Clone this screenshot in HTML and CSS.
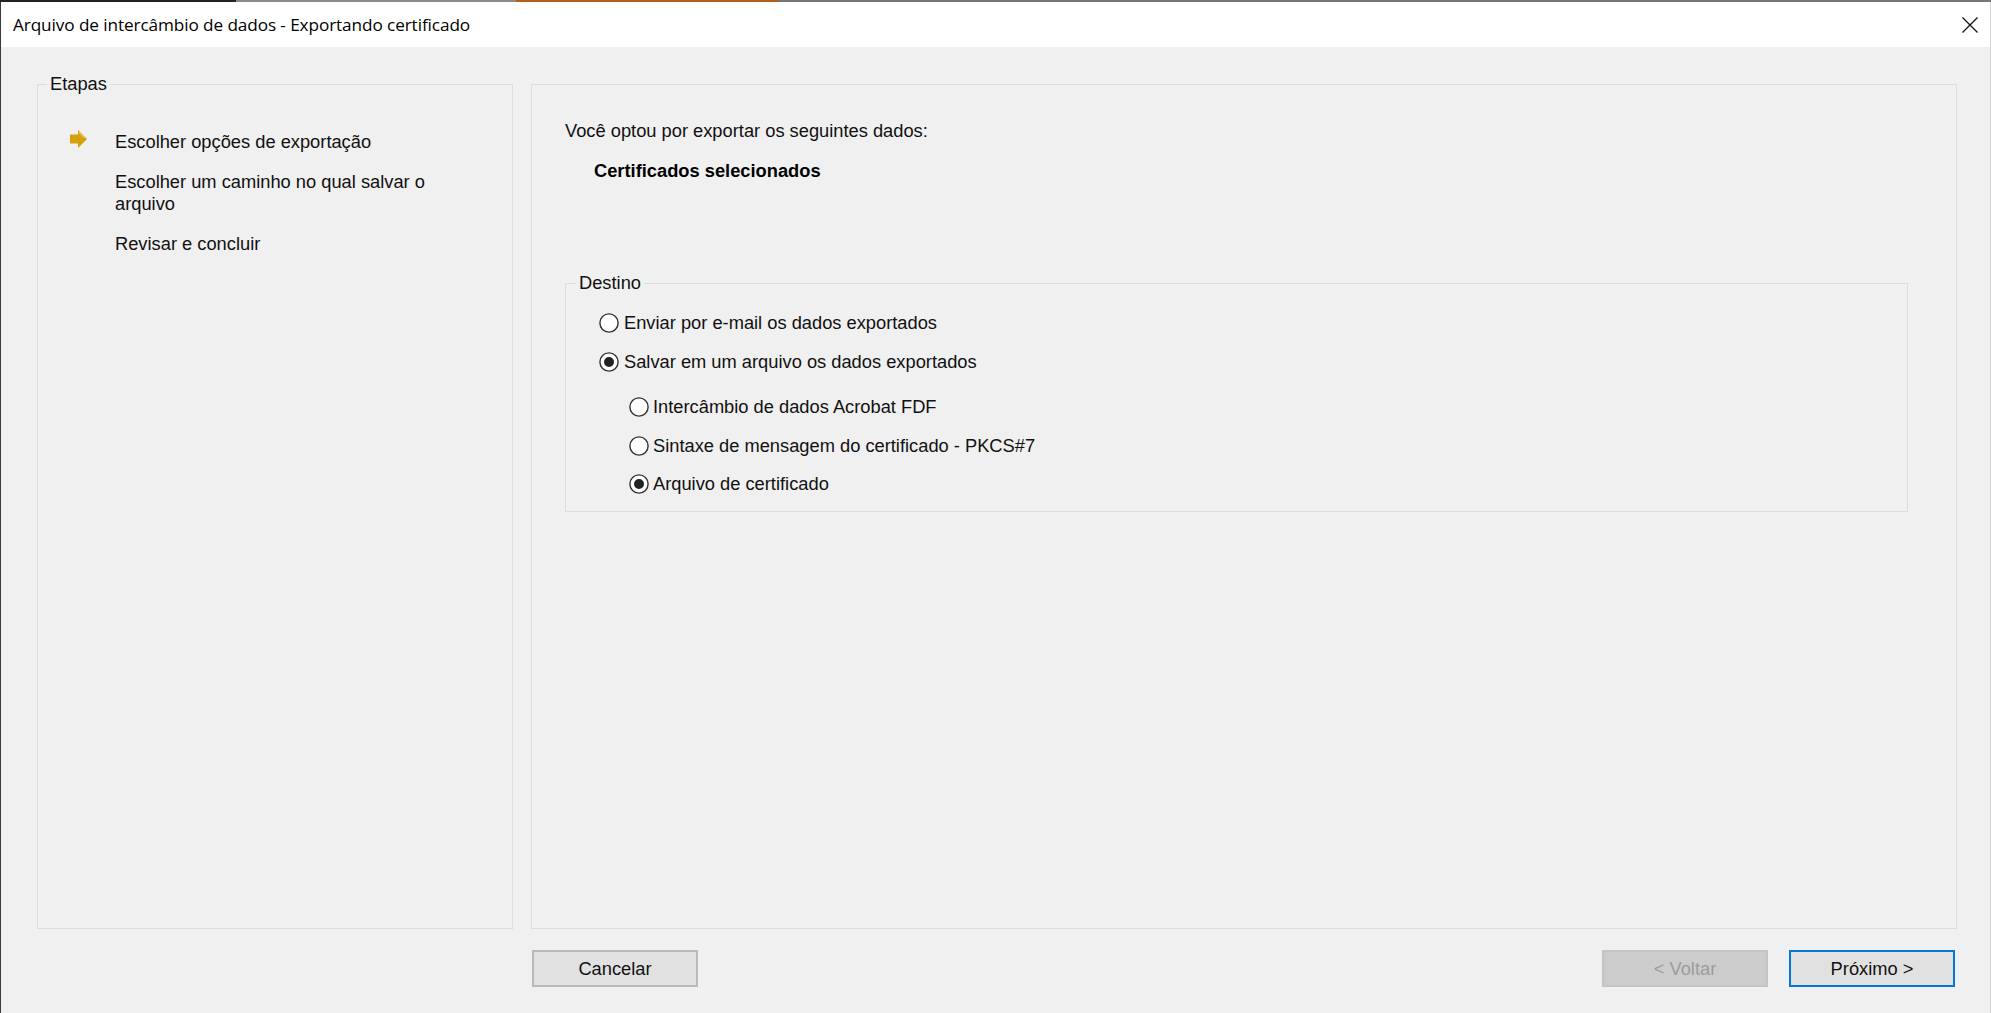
FILE: index.html
```html
<!DOCTYPE html>
<html lang="pt-BR">
<head>
<meta charset="utf-8">
<title>Arquivo de intercâmbio de dados - Exportando certificado</title>
<link rel="stylesheet" href="styles.css">
</head>
<body>
<div class="screen-edge">
  <span class="seg seg-dark"></span>
  <span class="seg seg-gray"></span>
  <span class="seg seg-orange"></span>
  <span class="seg seg-rest"></span>
</div>
<div class="window">
  <header class="titlebar">
    <span class="title">Arquivo de intercâmbio de dados - Exportando certificado</span>
    <button class="close" aria-label="Fechar">
      <svg width="16" height="16" viewBox="0 0 16 16"><path d="M0.5 0.5L15.5 15.5M15.5 0.5L0.5 15.5" stroke="#111" stroke-width="1.3" fill="none"/></svg>
    </button>
  </header>
  <main class="dialog">
    <fieldset class="steps">
      <legend>Etapas</legend>
      <ol class="step-list">
        <li class="step">
          <span class="step-icon"><svg width="17" height="18" viewBox="0 0 17 18"><path d="M0 4.5H8V0L17 9L8 18V13.5H0Z" fill="#d4a00c"/><path d="M8.8 2.2L14.5 7.8" stroke="#e8c458" stroke-width="1.2"/></svg></span>
          <span class="step-text">Escolher opções de exportação</span>
        </li>
        <li class="step">
          <span class="step-icon"></span>
          <span class="step-text">Escolher um caminho no qual salvar o arquivo</span>
        </li>
        <li class="step">
          <span class="step-icon"></span>
          <span class="step-text">Revisar e concluir</span>
        </li>
      </ol>
    </fieldset>
    <section class="main-panel">
      <p class="intro">Você optou por exportar os seguintes dados:</p>
      <p class="selected">Certificados selecionados</p>
      <fieldset class="group">
        <legend>Destino</legend>
        <div class="radio-list">
          <label class="radio">
            <svg class="radio-mark" width="20" height="20" viewBox="0 0 20 20"><circle cx="10" cy="10" r="9.1" fill="#fff" stroke="#333" stroke-width="1.4"/></svg>
            <span>Enviar por e-mail os dados exportados</span>
          </label>
          <label class="radio">
            <svg class="radio-mark" width="20" height="20" viewBox="0 0 20 20"><circle cx="10" cy="10" r="9.1" fill="#fff" stroke="#333" stroke-width="1.4"/><circle cx="10" cy="10" r="5" fill="#222"/></svg>
            <span>Salvar em um arquivo os dados exportados</span>
          </label>
          <div class="radio-sub">
            <label class="radio">
              <svg class="radio-mark" width="20" height="20" viewBox="0 0 20 20"><circle cx="10" cy="10" r="9.1" fill="#fff" stroke="#333" stroke-width="1.4"/></svg>
              <span>Intercâmbio de dados Acrobat FDF</span>
            </label>
            <label class="radio">
              <svg class="radio-mark" width="20" height="20" viewBox="0 0 20 20"><circle cx="10" cy="10" r="9.1" fill="#fff" stroke="#333" stroke-width="1.4"/></svg>
              <span>Sintaxe de mensagem do certificado - PKCS#7</span>
            </label>
            <label class="radio">
              <svg class="radio-mark" width="20" height="20" viewBox="0 0 20 20"><circle cx="10" cy="10" r="9.1" fill="#fff" stroke="#333" stroke-width="1.4"/><circle cx="10" cy="10" r="5" fill="#222"/></svg>
              <span>Arquivo de certificado</span>
            </label>
          </div>
        </div>
      </fieldset>
    </section>
    <div class="actions">
      <button class="btn">Cancelar</button>
      <div class="nav-buttons">
        <button class="btn btn-disabled" disabled>&lt; Voltar</button>
        <button class="btn btn-default">Próximo &gt;</button>
      </div>
    </div>
  </main>
</div>
</body>
</html>
```

FILE: styles.css
```css
* {
  box-sizing: border-box;
}

html, body {
  margin: 0;
  padding: 0;
}

body {
  width: 1991px;
  height: 1013px;
  overflow: hidden;
  background: #f0f0f0;
  font-family: "Liberation Sans", Arial, sans-serif;
  font-size: 18.3px;
  color: #111;
}

.screen-edge {
  display: flex;
  height: 2px;
}

.seg {
  display: block;
  height: 2px;
}

.seg-dark { width: 236px; background: #222; }
.seg-gray { width: 280px; background: #8a8a8a; }
.seg-orange { width: 263px; background: #b5601c; }
.seg-rest { flex: 1; background: #767676; }

.window {
  height: 1011px;
  display: flex;
  flex-direction: column;
  border-left: 1px solid #3a3a3a;
  border-right: 1px solid #d6d6d6;
  background: #f0f0f0;
}

.titlebar {
  height: 45px;
  flex: none;
  display: flex;
  align-items: center;
  justify-content: space-between;
  background: #fff;
  padding: 0 12px 0 12px;
}

.title {
  font-family: "Open Sans", "Noto Sans", sans-serif;
  font-size: 17.2px;
  color: #000;
  letter-spacing: -0.1px;
}

.close {
  border: 0;
  background: transparent;
  padding: 0;
  width: 16px;
  height: 16px;
  display: flex;
}

.dialog {
  flex: 1;
  display: grid;
  grid-template-columns: 476px 1426px;
  grid-template-rows: 855px 37px;
  column-gap: 18px;
  row-gap: 21px;
  padding: 27px 0 0 36px;
  align-content: start;
}

fieldset {
  margin: 0;
  min-width: 0;
  border: 1px solid #dcdcdc;
  padding: 0;
}

legend {
  margin-left: 9px;
  padding: 0 3px;
  line-height: 20px;
  font-size: 18.3px;
  color: #111;
}

.steps {
  grid-column: 1;
  grid-row: 1;
}

.step-list {
  list-style: none;
  margin: 0;
  padding: 37px 0 0 32px;
  display: flex;
  flex-direction: column;
  gap: 18px;
}

.step {
  display: flex;
  align-items: flex-start;
  gap: 28px;
  line-height: 22px;
}

.step-icon {
  width: 17px;
  height: 18px;
  flex: none;
  margin-top: -1px;
  display: flex;
}

.step-text {
  max-width: 330px;
}

.main-panel {
  grid-column: 2;
  grid-row: 1;
  margin-top: 10px;
  border: 1px solid #dcdcdc;
  padding: 35px 48px 0 33px;
}

.intro {
  margin: 0;
  line-height: 22px;
}

.selected {
  margin: 18px 0 0 29px;
  line-height: 22px;
  font-weight: bold;
  color: #000;
}

.group {
  margin-top: 91px;
  padding: 0 0 16px 0;
}

.group legend {
  margin-left: 10px;
}

.radio-list {
  padding: 19px 0 0 33px;
  display: flex;
  flex-direction: column;
  gap: 17px;
}

.radio-sub {
  margin-top: 6px;
  padding-left: 30px;
  display: flex;
  flex-direction: column;
  gap: 16.5px;
}

.radio {
  display: flex;
  align-items: center;
  gap: 5px;
  height: 22px;
  line-height: 22px;
}

.radio-sub .radio {
  gap: 4px;
}

.radio-mark {
  flex: none;
}

.actions {
  grid-column: 2;
  grid-row: 2;
  display: flex;
  justify-content: space-between;
  padding: 0 2px 0 1px;
}

.nav-buttons {
  display: flex;
  gap: 21px;
}

.btn {
  width: 166px;
  height: 37px;
  font-family: "Liberation Sans", Arial, sans-serif;
  font-size: 18.3px;
  color: #111;
  background: #e1e1e1;
  border: 2px solid #b9b9b9;
  padding: 0;
}

.btn-disabled {
  background: #cccccc;
  border-color: #c4c4c4;
  color: #9c9c9c;
}

.btn-default {
  border-color: #0078d7;
}
```
